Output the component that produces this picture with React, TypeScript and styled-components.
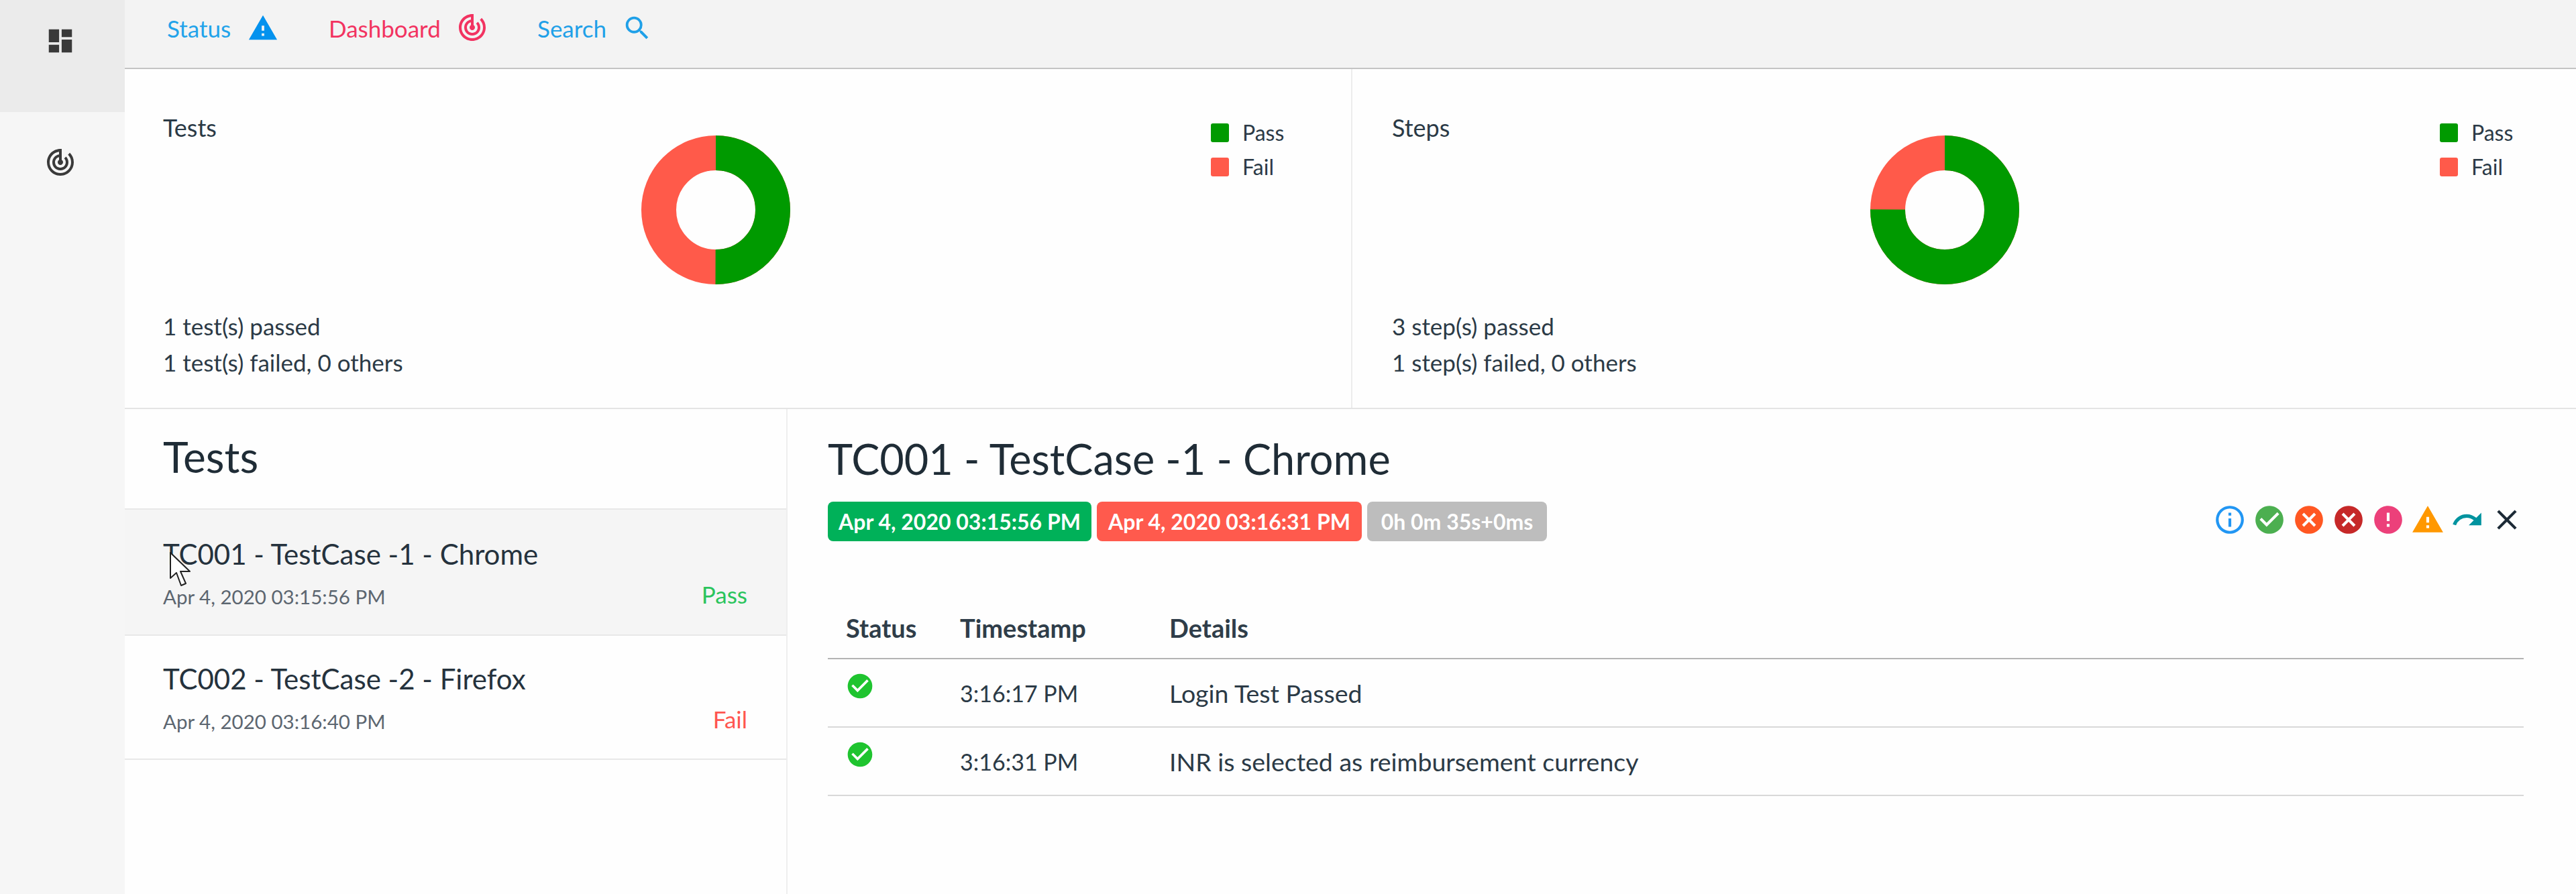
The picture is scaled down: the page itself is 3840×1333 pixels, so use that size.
import React from 'react';
import styled, { createGlobalStyle } from 'styled-components';
import {
  MdCancel,
  MdCheckCircle,
  MdClose,
  MdDashboard,
  MdError,
  MdInfoOutline,
  MdRedo,
  MdSearch,
  MdTrackChanges,
  MdWarning,
} from 'react-icons/md';

const GlobalStyle = createGlobalStyle`
  html, body {
    margin: 0;
    padding: 0;
    background: #fefefe;
  }
  body {
    font-family: 'Lato', 'Noto Sans', sans-serif;
    color: #2b3a46;
  }
`;

const Shell = styled.div`
  display: flex;
  width: 3840px;
  height: 1333px;
  overflow: hidden;
`;

const Sidebar = styled.nav`
  width: 186px;
  flex: none;
  background: #f6f6f6;
`;

const SideItem = styled.div<{ $active?: boolean }>`
  height: ${({ $active }) => ($active ? '167px' : '120px')};
  display: flex;
  justify-content: center;
  padding: ${({ $active }) => ($active ? '38px' : '51px')} 6px 0 0;
  box-sizing: border-box;
  background: ${({ $active }) => ($active ? '#ebebeb' : 'transparent')};
  color: #3a3a3a;
`;

const Content = styled.main`
  flex: 1;
  display: flex;
  flex-direction: column;
  min-width: 0;
`;

const TopBar = styled.header`
  height: 103px;
  flex: none;
  box-sizing: border-box;
  display: flex;
  padding: 19px 0 0 63px;
  background: #f3f3f3;
  border-bottom: 2px solid #c4c4c4;
`;

const NavLink = styled.a<{ $color: string; $gap: number; $width: number }>`
  display: flex;
  align-items: flex-start;
  gap: ${({ $gap }) => $gap}px;
  width: ${({ $width }) => $width}px;
  color: ${({ $color }) => $color};
  font-size: 35px;
  line-height: 46px;
`;

const ChartRow = styled.section`
  height: 507px;
  flex: none;
  display: grid;
  grid-template-columns: 1830px 1fr;
  border-bottom: 2px solid #e4e4e4;
  box-sizing: border-box;
`;

const ChartPanel = styled.div`
  padding: 65px 0 0 57px;
  border-right: 2px solid #ececec;
  &:last-child {
    border-right: 0;
    padding-left: 59px;
  }
`;

const ChartTop = styled.div`
  display: grid;
  grid-template-columns: 713px 222px 627px auto;
  height: 262px;
`;

const ChartTitle = styled.div`
  font-size: 36px;
  line-height: 44px;
`;

const Donut = styled.svg`
  display: block;
  margin-top: 34px;
`;

const Legend = styled.ul`
  list-style: none;
  margin: 15px 0 0;
  padding: 0;
  display: flex;
  flex-direction: column;
  gap: 22px;
`;

const LegendItem = styled.li`
  display: flex;
  align-items: center;
  gap: 20px;
  font-size: 32px;
  line-height: 29px;
`;

const Swatch = styled.span<{ $color: string }>`
  width: 27px;
  height: 28px;
  border-radius: 3px;
  background: ${({ $color }) => $color};
`;

const ChartFoot = styled.div`
  margin-top: 29px;
  font-size: 35px;
  line-height: 54px;
`;

const Lower = styled.section`
  flex: 1;
  display: flex;
  min-height: 0;
`;

const TestList = styled.aside`
  width: 988px;
  flex: none;
  box-sizing: border-box;
  border-right: 2px solid #eeeeee;
`;

const ListHead = styled.div`
  height: 150px;
  box-sizing: border-box;
  padding: 37px 0 0 57px;
  border-bottom: 2px solid #e8e8e8;
  font-size: 64px;
  line-height: 68px;
  color: #1f2c36;
`;

const ListItem = styled.div<{ $active?: boolean }>`
  position: relative;
  height: ${({ $active }) => ($active ? '188px' : '185px')};
  box-sizing: border-box;
  padding: ${({ $active }) => ($active ? '42px' : '40px')} 58px 0 57px;
  border-bottom: 2px solid #e8e8e8;
  background: ${({ $active }) => ($active ? '#f5f5f5' : 'transparent')};
`;

const ItemName = styled.div`
  font-size: 42px;
  line-height: 48px;
  color: #25323d;
`;

const ItemMeta = styled.div`
  display: flex;
  justify-content: space-between;
  align-items: flex-end;
  margin-top: 14px;
`;

const ItemDate = styled.span`
  font-size: 29.5px;
  line-height: 36px;
  color: #5c6670;
`;

const ItemState = styled.span<{ $color: string }>`
  font-size: 35px;
  line-height: 44px;
  color: ${({ $color }) => $color};
`;

const Cursor = styled.svg`
  position: absolute;
  left: 66px;
  top: 62px;
`;

const Detail = styled.div`
  flex: 1;
  padding: 42px 78px 0 60px;
  min-width: 0;
`;

const DetailTitle = styled.h2`
  margin: 0;
  font-size: 63px;
  font-weight: 400;
  line-height: 64px;
  color: #1f2c36;
`;

const DetailBar = styled.div`
  display: flex;
  justify-content: space-between;
  align-items: center;
  margin-top: 32px;
`;

const Badges = styled.div`
  display: flex;
  gap: 8px;
`;

const Badge = styled.span<{ $color: string; $width: number }>`
  width: ${({ $width }) => $width}px;
  height: 59px;
  display: flex;
  align-items: center;
  justify-content: center;
  border-radius: 8px;
  background: ${({ $color }) => $color};
  color: #fff;
  font-size: 32px;
  font-weight: 700;
`;

const StatusIcons = styled.div`
  display: flex;
  gap: 9px;
  margin-top: -6px;
`;

const StatusIcon = styled.span<{ $color: string }>`
  display: flex;
  color: ${({ $color }) => $color};
`;

const StepTable = styled.table`
  width: 100%;
  border-collapse: collapse;
  margin-top: 83px;
  table-layout: fixed;
  font-size: 37.5px;
`;

const HeadCell = styled.th<{ $width?: number }>`
  width: ${({ $width }) => ($width ? `${$width}px` : 'auto')};
  height: 92px;
  box-sizing: border-box;
  padding: 0 0 0 27px;
  text-align: left;
  font-size: 38px;
  font-weight: 700;
  border-bottom: 2px solid #b4b4b4;
  color: #2f3d49;
`;

const Cell = styled.td`
  height: 102px;
  box-sizing: border-box;
  padding: 0 0 0 27px;
  border-bottom: 2px solid #d8d8d8;
  vertical-align: middle;
`;

const TimeCell = styled(Cell)`
  font-size: 34px;
`;

const IconCell = styled(Cell)`
  padding-left: 26px;
  padding-top: 18px;
  vertical-align: top;
  color: #1fc42f;
`;

function Ring(props: { failShare: number }) {
  const r = 85;
  const c = 2 * Math.PI * r;
  const passShare = 1 - props.failShare;
  return (
    <Donut width="222" height="222" viewBox="0 0 222 222">
      <circle cx="111" cy="111" r={r} fill="none" stroke="#ff5a4a" strokeWidth="52" />
      <circle
        cx="111"
        cy="111"
        r={r}
        fill="none"
        stroke="#009a00"
        strokeWidth="52"
        strokeDasharray={`${c * passShare} ${c}`}
        transform="rotate(-90 111 111)"
      />
    </Donut>
  );
}

const charts = [
  { title: 'Tests', failShare: 0.5, lines: ['1 test(s) passed', '1 test(s) failed, 0 others'] },
  { title: 'Steps', failShare: 0.25, lines: ['3 step(s) passed', '1 step(s) failed, 0 others'] },
];

const tests = [
  { name: 'TC001 - TestCase -1 - Chrome', date: 'Apr 4, 2020 03:15:56 PM', state: 'Pass', color: '#2ac45c', active: true },
  { name: 'TC002 - TestCase -2 - Firefox', date: 'Apr 4, 2020 03:16:40 PM', state: 'Fail', color: '#ff5650', active: false },
];

const steps = [
  { time: '3:16:17 PM', details: 'Login Test Passed' },
  { time: '3:16:31 PM', details: 'INR is selected as reimbursement currency' },
];

export default function App() {
  return (
    <>
      <GlobalStyle />
      <Shell>
        <Sidebar>
          <SideItem $active>
            <MdDashboard size={46} />
          </SideItem>
          <SideItem>
            <MdTrackChanges size={48} />
          </SideItem>
        </Sidebar>
        <Content>
          <TopBar>
            <NavLink $color="#22a3ea" $gap={25} $width={241}>
              Status <MdWarning size={46} color="#0492ee" />
            </NavLink>
            <NavLink $color="#f23361" $gap={23} $width={311}>
              Dashboard <MdTrackChanges size={48} style={{ marginTop: -2 }} />
            </NavLink>
            <NavLink $color="#1fa0e8" $gap={23} $width={240}>
              Search <MdSearch size={46} />
            </NavLink>
          </TopBar>
          <ChartRow>
            {charts.map((chart) => (
              <ChartPanel key={chart.title}>
                <ChartTop>
                  <ChartTitle>{chart.title}</ChartTitle>
                  <Ring failShare={chart.failShare} />
                  <div />
                  <Legend>
                    <LegendItem>
                      <Swatch $color="#009a00" />
                      Pass
                    </LegendItem>
                    <LegendItem>
                      <Swatch $color="#ff5a4a" />
                      Fail
                    </LegendItem>
                  </Legend>
                </ChartTop>
                <ChartFoot>
                  {chart.lines.map((line) => (
                    <div key={line}>{line}</div>
                  ))}
                </ChartFoot>
              </ChartPanel>
            ))}
          </ChartRow>
          <Lower>
            <TestList>
              <ListHead>Tests</ListHead>
              {tests.map((test) => (
                <ListItem key={test.name} $active={test.active}>
                  <ItemName>{test.name}</ItemName>
                  <ItemMeta>
                    <ItemDate>{test.date}</ItemDate>
                    <ItemState $color={test.color}>{test.state}</ItemState>
                  </ItemMeta>
                  {test.active && (
                    <Cursor width="36" height="54" viewBox="0 0 36 54">
                      <path
                        d="M2 2 L2 40 L11 32 L18 51 L25 48 L17 30 L31 30 Z"
                        fill="#fff"
                        stroke="#222"
                        strokeWidth="2"
                        strokeLinejoin="round"
                      />
                    </Cursor>
                  )}
                </ListItem>
              ))}
            </TestList>
            <Detail>
              <DetailTitle>TC001 - TestCase -1 - Chrome</DetailTitle>
              <DetailBar>
                <Badges>
                  <Badge $color="#00b159" $width={393}>Apr 4, 2020 03:15:56 PM</Badge>
                  <Badge $color="#ff5a4d" $width={395}>Apr 4, 2020 03:16:31 PM</Badge>
                  <Badge $color="#bdbdbd" $width={268}>0h 0m 35s+0ms</Badge>
                </Badges>
                <StatusIcons>
                  <StatusIcon $color="#2196f3"><MdInfoOutline size={50} /></StatusIcon>
                  <StatusIcon $color="#4caf50"><MdCheckCircle size={50} /></StatusIcon>
                  <StatusIcon $color="#ff5722"><MdCancel size={50} /></StatusIcon>
                  <StatusIcon $color="#c62828"><MdCancel size={50} /></StatusIcon>
                  <StatusIcon $color="#ec407a"><MdError size={50} /></StatusIcon>
                  <StatusIcon $color="#ff9800"><MdWarning size={50} /></StatusIcon>
                  <StatusIcon $color="#00939f"><MdRedo size={50} /></StatusIcon>
                  <StatusIcon $color="#1c2a36"><MdClose size={50} /></StatusIcon>
                </StatusIcons>
              </DetailBar>
              <StepTable>
                <thead>
                  <tr>
                    <HeadCell $width={170}>Status</HeadCell>
                    <HeadCell $width={312}>Timestamp</HeadCell>
                    <HeadCell>Details</HeadCell>
                  </tr>
                </thead>
                <tbody>
                  {steps.map((step) => (
                    <tr key={step.time}>
                      <IconCell>
                        <MdCheckCircle size={44} />
                      </IconCell>
                      <TimeCell>{step.time}</TimeCell>
                      <Cell>{step.details}</Cell>
                    </tr>
                  ))}
                </tbody>
              </StepTable>
            </Detail>
          </Lower>
        </Content>
      </Shell>
    </>
  );
}
